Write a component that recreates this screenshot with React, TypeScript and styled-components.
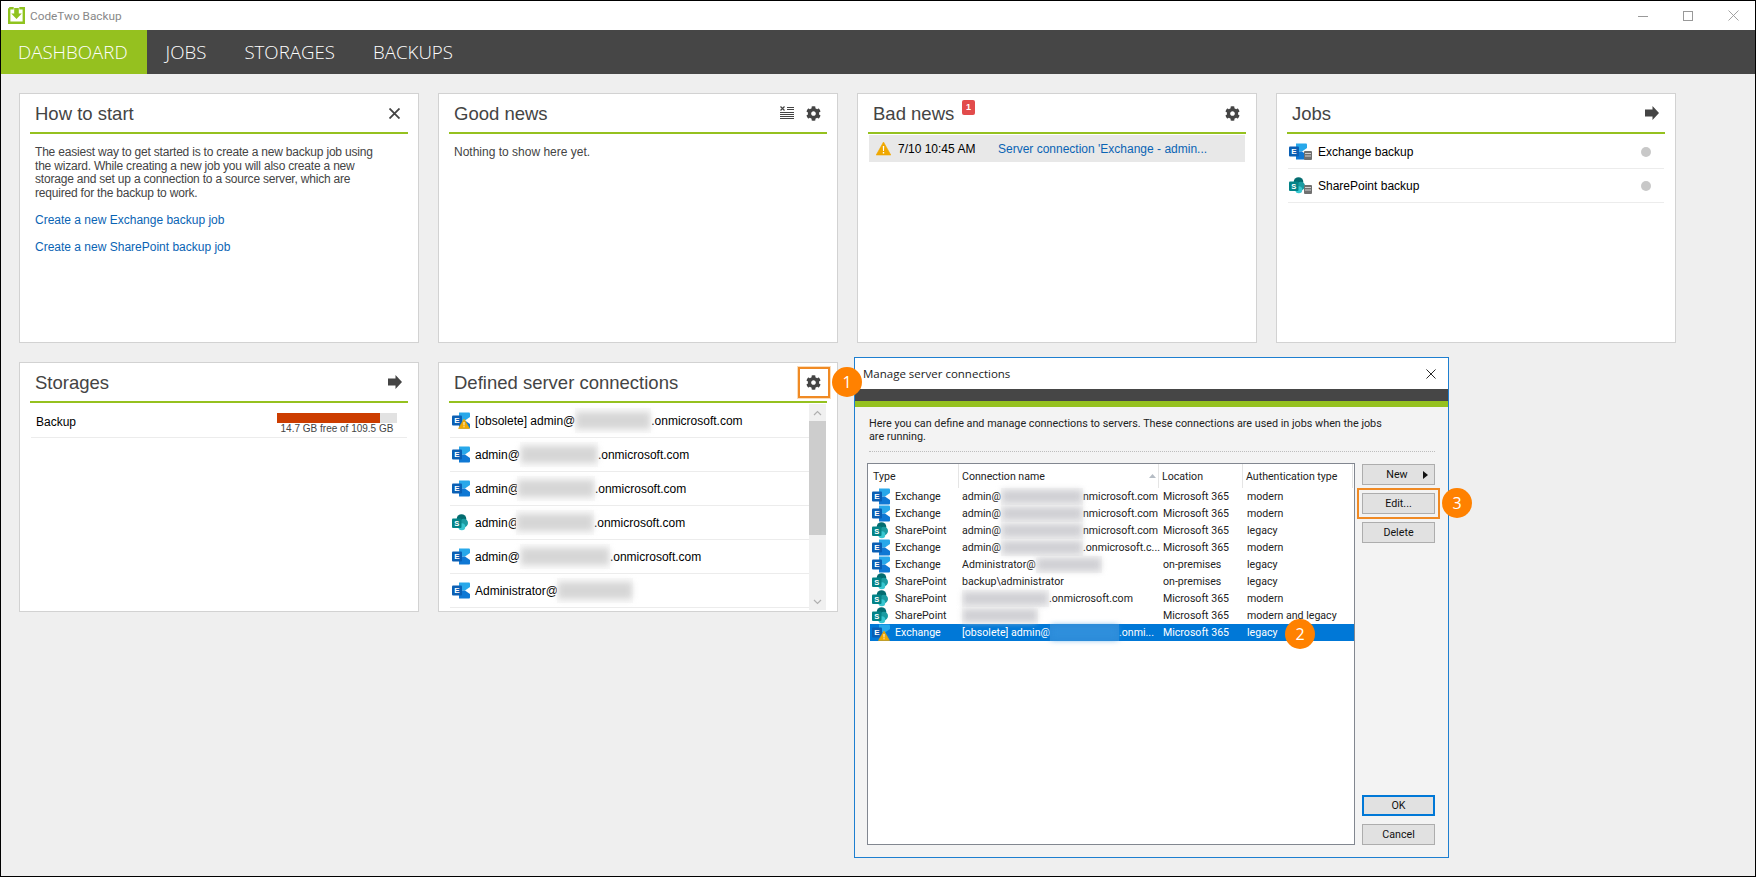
import React from "react";
import styled, { createGlobalStyle } from "styled-components";
import { FaCog } from "react-icons/fa";

const Global = createGlobalStyle`
  html, body { margin: 0; padding: 0; background: #000; }
  body { font-family: "Liberation Sans", Arial, sans-serif; overflow: hidden; }
  * { box-sizing: border-box; }
`;

const Win = styled.div`
  position: relative; width: 1756px; height: 877px; border: 1px solid #000;
  display: flex; flex-direction: column; background: #efefef; overflow: hidden;
`;
const TitleBar = styled.div`
  height: 29px; background: #fff; display: flex; align-items: center; padding-left: 7px; gap: 5px; flex: none;
`;
const AppTitle = styled.span`
  font: 11.8px Roboto, sans-serif; color: #888; flex: 1;
`;
const WinControls = styled.div`
  display: flex; align-items: center; gap: 35px; padding-right: 16px;
`;
const Nav = styled.nav`
  height: 44px; background: #464646; display: flex; flex: none;
`;
const NavItem = styled.a<{ $active?: boolean }>`
  height: 44px; display: flex; align-items: center; padding: ${p => (p.$active ? "0 19px 1px 17px" : "0 19px 1px")};
  background: ${p => (p.$active ? "#95c11f" : "transparent")};
  color: #fff; font: 300 18.7px "Open Sans", sans-serif;
`;
const Main = styled.main`
  flex: 1; padding: 19px 0 0 18px; display: grid; grid-template-columns: repeat(4, 400px);
  grid-template-rows: 250px 250px; gap: 19px; align-content: start;
`;
const Card = styled.section`
  background: #fff; border: 1px solid #d2d2d2; padding: 0 10px; display: flex; flex-direction: column; min-height: 0;
`;
const CardHead = styled.header`
  height: 40px; border-bottom: 2px solid #95c11f; display: flex; align-items: center; padding: 0 6px 0 5px; flex: none; position: relative;
`;
const CardTitle = styled.h2`
  margin: 0; padding-top: 1px; font: 400 18.5px "Liberation Sans", Arial, sans-serif; color: #444; flex: 1;
`;
const HeadIcons = styled.div<{ $pr?: number }>`
  display: flex; align-items: center; gap: 12px; color: #444; font-size: 15px; padding-right: ${p => p.$pr ?? 0}px;
  svg { display: block; }
`;
const Count = styled.span`
  position: absolute; left: 94px; top: 6px; width: 13px; height: 15px; border-radius: 2px; background: #e24b4b;
  color: #fff; font: 700 9px/15px "Liberation Sans", sans-serif; text-align: center;
`;
const Body = styled.div`
  padding: 12px 5px 0; font-size: 12px; line-height: 13.5px; color: #444;
`;
const Para = styled.p`
  margin: 0 0 14px; width: 356px; letter-spacing: -0.2px;
`;
const LinkText = styled.a`
  display: block; color: #0a64b4; margin-bottom: 13.5px;
`;
const NewsRow = styled.div`
  margin: 1px 1px 0; height: 27px; background: #e8e8e8; display: flex; align-items: center; padding-left: 7px; font-size: 12px; color: #000; flex: none;
`;
const NewsDate = styled.span`
  margin-left: 7px; width: 100px;
`;
const NewsLink = styled.a`
  color: #0a64b4;
`;
const JobList = styled.div`
  margin-top: 1px; display: flex; flex-direction: column;
`;
const JobRow = styled.div`
  height: 34px; border-bottom: 1px solid #ececec; display: flex; align-items: center; margin: 0 1px; font-size: 12px; color: #000; padding-left: 1px; flex: none;
`;
const JobName = styled.span`
  margin-left: 6px; flex: 1;
`;
const Dot = styled.span`
  width: 10px; height: 10px; border-radius: 50%; background: #c8c8c8; margin-right: 13px;
`;
const StorageRow = styled.div`
  height: 34px; border-bottom: 1px solid #ececec; margin: 1px 1px 0; padding: 9px 10px 0 5px; display: flex; justify-content: space-between; font-size: 12px; color: #000;
`;
const StorageName = styled.span`
  line-height: 14px; margin-top: 2px;
`;
const Meter = styled.div`
  width: 120px; display: flex; flex-direction: column; align-items: center;
`;
const Track = styled.div`
  width: 120px; height: 10px; background: #e2e2e2; flex: none;
`;
const Fill = styled.div`
  height: 10px; background: #cc3d00;
`;
const MeterLabel = styled.span`
  font-size: 10px; line-height: 11px; color: #444; white-space: nowrap;
`;
const ConnWrap = styled.div`
  flex: 1; margin: 1px; display: flex; min-height: 0; overflow: hidden;
`;
const ConnList = styled.div`
  flex: 1; min-width: 0;
`;
const ConnRow = styled.div`
  height: 34px; border-bottom: 1px solid #ececec; display: flex; align-items: center; padding-left: 2px; font-size: 12px; color: #000; white-space: nowrap; overflow: hidden; flex: none;
`;
const ConnText = styled.span`
  margin-left: 5px; display: flex; align-items: center;
`;
const Blur = styled.span<{ $w: number; $ml?: number }>`
  display: inline-block; position: relative; width: ${p => p.$w}px; height: 25px; flex: none; margin-left: ${p => p.$ml ?? 0}px;
  background: #fafafa;
  &::after {
    content: ""; position: absolute; inset: 4px 1px; background: #d6d6d6; filter: blur(3px);
  }
`;
const ScrollBar = styled.div`
  width: 17px; background: #f0f0f0; display: flex; flex-direction: column; flex: none; align-items: stretch;
`;
const ScrollBtn = styled.div`
  height: 17px; display: flex; align-items: center; justify-content: center; flex: none;
`;
const Thumb = styled.div`
  height: 114px; background: #cdcdcd; flex: none;
`;
const ScrollGap = styled.div`
  flex: 1;
`;
const GearBox = styled.div`
  position: absolute; left: 349px; top: 4px; width: 32px; height: 31px; border: 2px solid #f08a24; box-shadow: 0 0 0 1px #fbdcb8;
`;
const Step = styled.span<{ $x: number; $y: number }>`
  position: absolute; left: ${p => p.$x - 15}px; top: ${p => p.$y - 15}px; width: 30px; height: 30px; border-radius: 50%;
  background: #ff8100; color: #fff; font: 16px/30px "Open Sans", sans-serif; text-align: center; z-index: 3;
`;
const Dialog = styled.div`
  position: absolute; left: 853px; top: 356px; width: 595px; height: 501px; background: #f3f3f3; border: 1px solid #1e7fd0;
  display: flex; flex-direction: column; font-family: Roboto, sans-serif; z-index: 2; color: #222;
`;
const DlgTitle = styled.div`
  height: 31px; background: #fff; display: flex; align-items: center; justify-content: space-between; padding: 0 12px 0 8px;
  font: 11.5px "Open Sans", sans-serif; color: #222; flex: none;
`;
const DlgBand = styled.div`
  height: 18px; background: #464646; border-bottom: 6px solid #95c11f; flex: none;
`;
const DlgBody = styled.div`
  flex: 1; padding: 10px 13px 12px 14px; display: flex; flex-direction: column; min-height: 0;
`;
const Intro = styled.p`
  margin: 0; font-size: 10.8px; line-height: 13px; color: #222; height: 35px; border-bottom: 1px dotted #bdbdbd; flex: none; padding-right: 40px;
`;
const DlgMain = styled.div`
  flex: 1; margin-top: 11px; display: flex; gap: 7px; min-height: 0; margin-left: -2px;
`;
const ListBox = styled.div`
  width: 488px; background: #fff; border: 1px solid #828790; padding: 0 0 0 1px; display: flex; flex-direction: column;
`;
const ColsHead = styled.div`
  height: 24px; display: grid; grid-template-columns: 90px 200px 84px 110px; flex: none;
`;
const Th = styled.div`
  font-size: 10.6px; padding-left: 3px; color: #222; border-right: 1px solid #e5e5e5; height: 24px; display: flex; justify-content: space-between; align-items: center;
  &:nth-child(1) { padding-left: 4px; }
`;
const Tr = styled.div<{ $sel?: boolean }>`
  height: 17px; display: grid; grid-template-columns: 90px 200px 84px 110px; align-items: center; flex: none;
  background: ${p => (p.$sel ? "#0078d7" : "transparent")}; color: ${p => (p.$sel ? "#fff" : "#222")};
  font-size: 10.6px; white-space: nowrap; margin-left: 1px;
`;
const TdType = styled.div`
  display: flex; align-items: center; gap: 5px; padding-left: 2px; overflow: hidden;
`;
const TdName = styled.div`
  display: flex; align-items: center; overflow: visible; padding-left: 2px; height: 17px;
`;
const Td = styled.div`
  padding-left: 3px; overflow: hidden;
`;
const BlurRow = styled.span<{ $w: number; $bg?: string; $tone?: string }>`
  display: inline-block; position: relative; flex: none; height: 17px; width: ${p => p.$w}px;
  background: ${p => p.$bg ?? "#f6f6f6"};
  &::after { content: ""; position: absolute; inset: 2px 1px; background: ${p => p.$tone ?? "#d0d0d4"}; filter: blur(3px); }
`;
const Btns = styled.div`
  width: 73px; display: flex; flex-direction: column; gap: 8px; margin-top: 1px;
`;
const Btn = styled.button<{ $def?: boolean; $hl?: boolean }>`
  height: 21px; width: 73px; background: #e1e1e1; border: ${p => (p.$def ? "2px solid #0078d7" : "1px solid #adadad")};
  font: 10.7px Roboto, sans-serif; color: #111; padding: 0; display: flex; align-items: center; justify-content: center; gap: 15px; position: relative;
  ${p => (p.$hl ? "outline: 2px solid #f08a24; outline-offset: 3px;" : "")}
  &:first-child { padding-left: 17px; }
`;
const BtnSpacer = styled.div`
  flex: 1;
`;

const Gear = () => <FaCog size={15} />;
const Arrow = () => (
  <svg width="14" height="14" viewBox="0 0 14 14"><path d="M0 3.500h7.500V0L14 7l-6.500 7v-3.500H0z" fill="#444" /></svg>
);
const CloseX = ({ s = 11, c = "#444", w = 1.8 }: { s?: number; c?: string; w?: number }) => (
  <svg width={s} height={s} viewBox="0 0 11 11"><path d="M.5.5l10 10M10.500.5l-10 10" stroke={c} strokeWidth={w} fill="none" /></svg>
);
const ClearList = () => (
  <svg width="14" height="14" viewBox="0 0 14 14" stroke="#444" fill="none">
    <path d="M.5.500l4 4M4.500.500l-4 4" strokeWidth="1.200" />
    <path d="M7 1.500h7M7 3.500h7M0 6.500h14M0 8.500h14M0 10.500h14M0 12.500h14" strokeWidth="1" />
  </svg>
);
const AppIcon = () => (
  <svg width="17" height="17" viewBox="0 0 17 17">
    <path d="M1.200 1.200h4.500M11.300 1.200h4.500V15.800H1.200V1.200" fill="none" stroke="#8fc31f" strokeWidth="2.400" />
    <path d="M6.200 1h4.600v5.500h3L8.500 12 3.200 6.500h3z" fill="#8fc31f" />
  </svg>
);
const Warn = ({ s = 15 }: { s?: number }) => (
  <svg width={s} height={s} viewBox="0 0 15 15">
    <path d="M7.500 1L14.800 14H.2z" fill="#f0a800" stroke="#f0a800" strokeLinejoin="round" strokeWidth=".6" />
    <path d="M6.800 5h1.400l-.2 5h-1z M6.800 11h1.400v1.500H6.800z" fill="#fff" />
  </svg>
);
const ExBase = () => (
  <>
    <path d="M7 .5h10q1 0 1 1v3.500l-5 3.500H7z" fill="#28a8ea" />
    <path d="M7 8.500h6l5 3.500v3.500q0 1-1 1H7z" fill="#0f78d4" />
    <rect x="0" y="3.500" width="10" height="10" rx="1" fill="#0a5fb4" />
    <text x="5" y="11.300" textAnchor="middle" fontSize="8" fontWeight="700" fontFamily="Liberation Sans" fill="#fff">E</text>
  </>
);
const SpBase = () => (
  <>
    <circle cx="9.500" cy="5" r="4.800" fill="#036c70" />
    <circle cx="11.800" cy="9" r="4.200" fill="#1a9ba1" />
    <circle cx="9.800" cy="12.800" r="3.500" fill="#37c6d0" />
    <rect x="0" y="4.500" width="9.500" height="9.500" rx="1" fill="#038387" />
    <text x="4.750" y="11.900" textAnchor="middle" fontSize="7.500" fontWeight="700" fontFamily="Liberation Sans" fill="#fff">S</text>
  </>
);
const Exchange = () => <svg width="18" height="17" viewBox="0 0 18 17" style={{ flex: "none" }}><ExBase /></svg>;
const SharePoint = () => <svg width="18" height="17" viewBox="0 0 18 17" style={{ flex: "none" }}><SpBase /></svg>;
const ExWarn = () => (
  <svg width="18" height="17" viewBox="0 0 18 17" style={{ flex: "none" }}>
    <ExBase />
    <path d="M12 7L17.500 16.500H6.500z" fill="#f0a800" stroke="#f0a800" strokeLinejoin="round" strokeWidth=".6" />
    <path d="M11.500 10h1l-.1 3.500h-.8zM11.500 14.200h1v1h-1z" fill="#fff" />
  </svg>
);
const Db = () => (
  <>
    <rect x="15" y="8" width="8" height="9" rx="1" fill="#707070" />
    <path d="M16 10.500h6M16 13h6" stroke="#ddd" strokeWidth=".9" />
  </>
);
const JobEx = () => <svg width="23" height="17" viewBox="0 0 23 17" style={{ flex: "none" }}><ExBase /><Db /></svg>;
const JobSp = () => <svg width="23" height="17" viewBox="0 0 23 17" style={{ flex: "none" }}><SpBase /><Db /></svg>;
const Chev = ({ up }: { up?: boolean }) => (
  <svg width="9" height="6" viewBox="0 0 9 6"><path d={up ? "M1 5l3.500-3.500L8 5" : "M1 1l3.500 3.500L8 1"} stroke="#b0b0b0" strokeWidth="1.200" fill="none" /></svg>
);

const rows: { t: "e" | "s"; type: string; before: string; w: number; after: string; loc: string; auth: string }[] = [
  { t: "e", type: "Exchange", before: "admin@", w: 82, after: "nmicrosoft.com", loc: "Microsoft 365", auth: "modern" },
  { t: "e", type: "Exchange", before: "admin@", w: 82, after: "nmicrosoft.com", loc: "Microsoft 365", auth: "modern" },
  { t: "s", type: "SharePoint", before: "admin@", w: 82, after: "nmicrosoft.com", loc: "Microsoft 365", auth: "legacy" },
  { t: "e", type: "Exchange", before: "admin@", w: 82, after: ".onmicrosoft.c...", loc: "Microsoft 365", auth: "modern" },
  { t: "e", type: "Exchange", before: "Administrator@", w: 66, after: "", loc: "on-premises", auth: "legacy" },
  { t: "s", type: "SharePoint", before: "backup\\administrator", w: 0, after: "", loc: "on-premises", auth: "legacy" },
  { t: "s", type: "SharePoint", before: "", w: 87, after: ".onmicrosoft.com", loc: "Microsoft 365", auth: "modern" },
  { t: "s", type: "SharePoint", before: "", w: 76, after: "", loc: "Microsoft 365", auth: "modern and legacy" },
];

export default function App() {
  return (
    <Win>
      <Global />
      <TitleBar>
        <AppIcon />
        <AppTitle>CodeTwo Backup</AppTitle>
        <WinControls>
          <svg width="10" height="10" viewBox="0 0 10 10"><path d="M0 5.500h10" stroke="#999" /></svg>
          <svg width="10" height="10" viewBox="0 0 10 10"><rect x=".5" y=".5" width="9" height="9" fill="none" stroke="#999" /></svg>
          <CloseX s={11} c="#999" w={0.9} />
        </WinControls>
      </TitleBar>
      <Nav>
        <NavItem $active>DASHBOARD</NavItem>
        <NavItem>JOBS</NavItem>
        <NavItem>STORAGES</NavItem>
        <NavItem>BACKUPS</NavItem>
      </Nav>
      <Main>
        <Card>
          <CardHead>
            <CardTitle>How to start</CardTitle>
            <HeadIcons $pr={2}><CloseX /></HeadIcons>
          </CardHead>
          <Body>
            <Para>The easiest way to get started is to create a new backup job using the wizard. While creating a new job you will also create a new storage and set up a connection to a source server, which are required for the backup to work.</Para>
            <LinkText>Create a new Exchange backup job</LinkText>
            <LinkText>Create a new SharePoint backup job</LinkText>
          </Body>
        </Card>
        <Card>
          <CardHead>
            <CardTitle>Good news</CardTitle>
            <HeadIcons><ClearList /><Gear /></HeadIcons>
          </CardHead>
          <Body>Nothing to show here yet.</Body>
        </Card>
        <Card>
          <CardHead>
            <CardTitle>Bad news</CardTitle>
            <Count>1</Count>
            <HeadIcons><Gear /></HeadIcons>
          </CardHead>
          <NewsRow>
            <Warn />
            <NewsDate>7/10 10:45 AM</NewsDate>
            <NewsLink>Server connection 'Exchange - admin...</NewsLink>
          </NewsRow>
        </Card>
        <Card>
          <CardHead>
            <CardTitle>Jobs</CardTitle>
            <HeadIcons><Arrow /></HeadIcons>
          </CardHead>
          <JobList>
            <JobRow><JobEx /><JobName>Exchange backup</JobName><Dot /></JobRow>
            <JobRow><JobSp /><JobName>SharePoint backup</JobName><Dot /></JobRow>
          </JobList>
        </Card>
        <Card>
          <CardHead>
            <CardTitle>Storages</CardTitle>
            <HeadIcons><Arrow /></HeadIcons>
          </CardHead>
          <StorageRow>
            <StorageName>Backup</StorageName>
            <Meter>
              <Track><Fill style={{ width: `${(103 / 120) * 100}%` }} /></Track>
              <MeterLabel>14.7 GB free of 109.5 GB</MeterLabel>
            </Meter>
          </StorageRow>
        </Card>
        <Card>
          <CardHead>
            <CardTitle>Defined server connections</CardTitle>
            <HeadIcons><Gear /></HeadIcons>
            <GearBox />
          </CardHead>
          <ConnWrap>
            <ConnList>
              <ConnRow><ExWarn /><ConnText>[obsolete] admin@<Blur $w={76} />.onmicrosoft.com</ConnText></ConnRow>
              <ConnRow><Exchange /><ConnText>admin@<Blur $w={78} />.onmicrosoft.com</ConnText></ConnRow>
              <ConnRow><Exchange /><ConnText>admin@<Blur $w={78} $ml={-3} />.onmicrosoft.com</ConnText></ConnRow>
              <ConnRow><SharePoint /><ConnText>admin@<Blur $w={78} $ml={-4} />.onmicrosoft.com</ConnText></ConnRow>
              <ConnRow><Exchange /><ConnText>admin@<Blur $w={90} />.onmicrosoft.com</ConnText></ConnRow>
              <ConnRow><Exchange /><ConnText>Administrator@<Blur $w={76} $ml={-1} /></ConnText></ConnRow>
            </ConnList>
            <ScrollBar>
              <ScrollBtn><Chev up /></ScrollBtn>
              <Thumb />
              <ScrollGap />
              <ScrollBtn><Chev /></ScrollBtn>
            </ScrollBar>
          </ConnWrap>
        </Card>
      </Main>
      <Step $x={846} $y={381}>1</Step>
      <Step $x={1299} $y={633}>2</Step>
      <Step $x={1456} $y={502}>3</Step>
      <Dialog>
        <DlgTitle>
          <span>Manage server connections</span>
          <CloseX s={10} c="#111" w={1} />
        </DlgTitle>
        <DlgBand />
        <DlgBody>
          <Intro>Here you can define and manage connections to servers. These connections are used in jobs when the jobs are running.</Intro>
          <DlgMain>
            <ListBox>
              <ColsHead>
                <Th>Type</Th>
                <Th>Connection name<svg width="7" height="4" viewBox="0 0 7 4" style={{ marginRight: 2 }}><path d="M3.500 0L7 4H0z" fill="#b5bcc4" /></svg></Th>
                <Th>Location</Th>
                <Th>Authentication type</Th>
              </ColsHead>
              {rows.map((r, i) => (
                <Tr key={i}>
                  <TdType>{r.t === "e" ? <Exchange /> : <SharePoint />}{r.type}</TdType>
                  <TdName>{r.before}{r.w > 0 && <BlurRow $w={r.w} />}{r.after}</TdName>
                  <Td>{r.loc}</Td>
                  <Td>{r.auth}</Td>
                </Tr>
              ))}
              <Tr $sel>
                <TdType><ExWarn />Exchange</TdType>
                <TdName>[obsolete] admin@<BlurRow $w={69} $bg="#2a8ad8" $tone="#2f8fdc" />.onmi...</TdName>
                <Td>Microsoft 365</Td>
                <Td>legacy</Td>
              </Tr>
            </ListBox>
            <Btns>
              <Btn>New<svg width="5" height="8" viewBox="0 0 5 8"><path d="M0 0l5 4-5 4z" fill="#111" /></svg></Btn>
              <Btn $hl>Edit...</Btn>
              <Btn>Delete</Btn>
              <BtnSpacer />
              <Btn $def>OK</Btn>
              <Btn>Cancel</Btn>
            </Btns>
          </DlgMain>
        </DlgBody>
      </Dialog>
    </Win>
  );
}
